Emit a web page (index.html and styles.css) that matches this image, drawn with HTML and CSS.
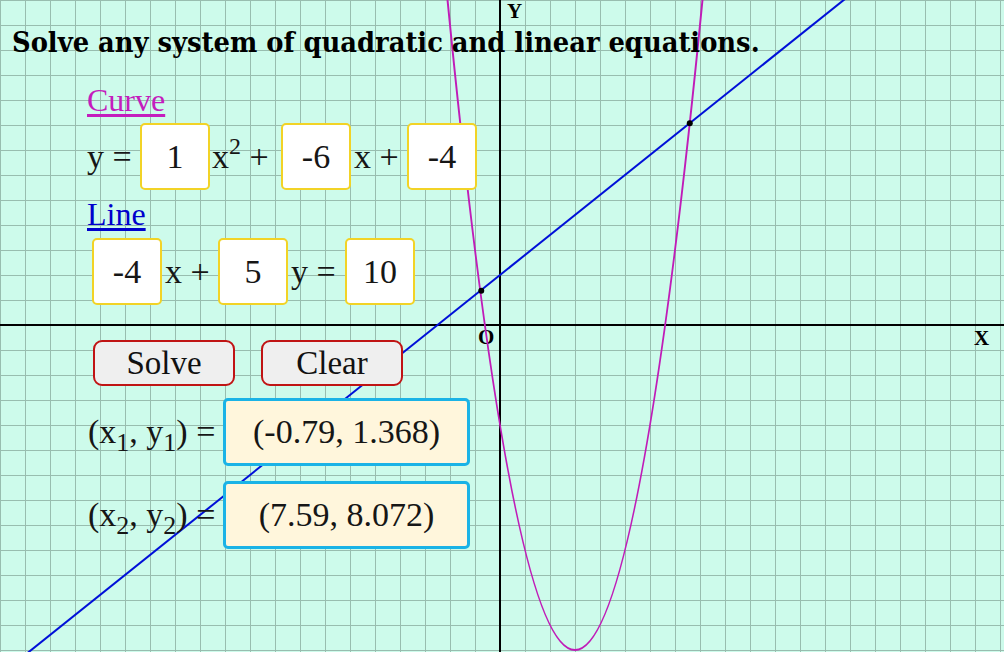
FILE: index.html
```html
<!DOCTYPE html>
<html>
<head>
<meta charset="utf-8">
<link rel="stylesheet" href="styles.css">
</head>
<body>
<div class="page">
  <svg class="graph" width="1004" height="652" viewBox="0 0 1004 652">
    <line x1="0" y1="325" x2="1004" y2="325" stroke="#000" stroke-width="2"/>
    <line x1="500" y1="0" x2="500" y2="652" stroke="#000" stroke-width="2"/>
    <text x="507" y="18" class="axis">Y</text>
    <text x="974" y="345" class="axis">X</text>
    <text x="478" y="344" class="axis">O</text>
    <path d="M425,-250 Q575,1550 725,-250" fill="none" stroke="#c01cb8" stroke-width="2"/>
    <line x1="0" y1="675" x2="1025" y2="-145" stroke="#0010d8" stroke-width="2"/>
    <circle cx="481.25" cy="290.8" r="3" fill="#000"/>
    <circle cx="689.75" cy="123.2" r="3" fill="#000"/>
  </svg>
  <div class="content">
    <h1 class="title">Solve any system of quadratic and linear equations.</h1>
    <div class="panel">
      <div class="link-row"><a class="link curve-link" href="#">Curve</a></div>
      <div class="row row-curve">
        <span class="lbl w53">y =</span>
        <div class="box">1</div>
        <span class="lbl w71">x<sup>2</sup> +</span>
        <div class="box">-6</div>
        <span class="lbl w56">x +</span>
        <div class="box">-4</div>
      </div>
      <div class="link-row link-row-line"><a class="link line-link" href="#">Line</a></div>
      <div class="row row-line">
        <div class="box">-4</div>
        <span class="lbl w56">x +</span>
        <div class="box">5</div>
        <span class="lbl w57">y =</span>
        <div class="box">10</div>
      </div>
      <div class="buttons">
        <button class="btn">Solve</button>
        <button class="btn">Clear</button>
      </div>
      <div class="result result-1">
        <span class="res-lbl">(x<sub>1</sub>, y<sub>1</sub>) =</span>
        <div class="res-box">(-0.79, 1.368)</div>
      </div>
      <div class="result result-2">
        <span class="res-lbl">(x<sub>2</sub>, y<sub>2</sub>) =</span>
        <div class="res-box">(7.59, 8.072)</div>
      </div>
    </div>
  </div>
</div>
</body>
</html>
```
FILE: styles.css
```css
html, body {
  margin: 0;
  padding: 0;
}
body {
  font-family: "Liberation Serif", serif;
  color: #161616;
}
.page {
  position: relative;
  width: 1004px;
  height: 652px;
  overflow: hidden;
  background-color: #cdfbeb;
  background-image:
    linear-gradient(to right, #98bdaf 1px, transparent 1px),
    linear-gradient(to bottom, #98bdaf 1px, transparent 1px);
  background-size: 25px 25px;
  background-position: 0 0;
}
.graph {
  position: absolute;
  left: 0;
  top: 0;
}
.axis {
  font-family: "Liberation Serif", serif;
  font-weight: bold;
  font-size: 21px;
  fill: #000;
}
.content {
  position: relative;
  padding: 24px 0 0 12px;
}
.title {
  margin: 0;
  font-family: "DejaVu Serif Condensed", "DejaVu Serif", serif;
  font-stretch: condensed;
  font-size: 28.7px;
  line-height: 36px;
  font-weight: bold;
  color: #000;
  white-space: nowrap;
}
.panel {
  padding-left: 75px;
}
.link-row {
  margin-top: 22px;
  height: 36px;
  line-height: 36px;
  font-size: 32px;
}
.link-row-line {
  margin-top: 6px;
}
.link {
  text-decoration: underline;
  text-decoration-thickness: 3px;
  text-underline-offset: 3px;
}
.curve-link { color: #c41dbd; }
.line-link { color: #0000cc; }
.row {
  display: flex;
  align-items: center;
  height: 67px;
}
.row-curve { margin-top: 5px; }
.row-line { margin-top: 6px; margin-left: 5px; }
.lbl {
  font-size: 34px;
  box-sizing: border-box;
  padding-left: 3px;
  white-space: nowrap;
}
.lbl sup {
  font-size: 24px;
  line-height: 0;
  vertical-align: 14px;
}
.w53 { width: 53px; padding-left: 0; }
.w71 { width: 71px; padding-left: 2px; }
.w56 { width: 56px; }
.w57 { width: 57px; }
.box {
  box-sizing: border-box;
  width: 70px;
  height: 67px;
  border: 2px solid #f2d326;
  border-radius: 5px;
  background: #fff;
  display: flex;
  align-items: center;
  justify-content: center;
  font-size: 34px;
}
.buttons {
  display: flex;
  gap: 26px;
  margin-top: 35px;
  margin-left: 6px;
}
.btn {
  box-sizing: border-box;
  width: 142px;
  height: 46px;
  border: 2px solid #c01414;
  border-radius: 9px;
  background: #efefef;
  font-family: "Liberation Serif", serif;
  font-size: 33px;
  color: #111;
  padding: 0;
  line-height: 40px;
}
.result {
  display: flex;
  align-items: center;
  margin-left: 1px;
}
.result-1 { margin-top: 12px; }
.result-2 { margin-top: 15px; }
.res-lbl {
  width: 135px;
  font-size: 34px;
  white-space: nowrap;
}
.res-lbl sub {
  font-size: 26px;
  line-height: 0;
  vertical-align: -8px;
}
.res-box {
  box-sizing: border-box;
  width: 247px;
  height: 68px;
  border: 3px solid #1ab3e6;
  border-radius: 5px;
  background: #fff6dc;
  display: flex;
  align-items: center;
  justify-content: center;
  font-size: 34px;
}
```
